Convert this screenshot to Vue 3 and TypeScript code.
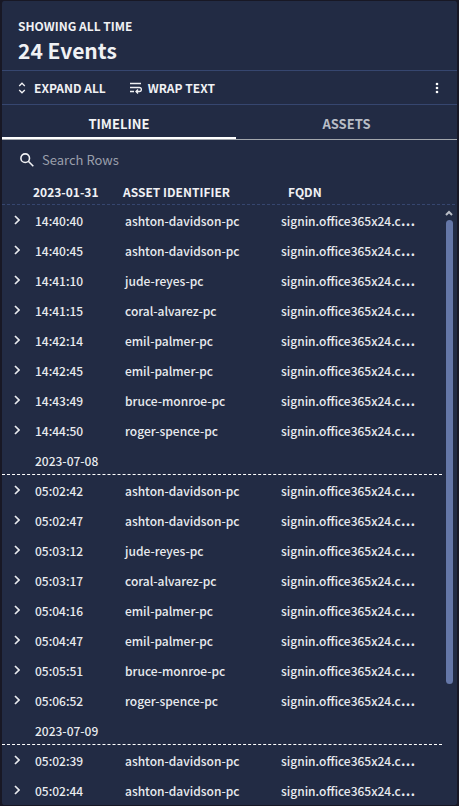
<script setup lang="ts">
import { computed, ref } from 'vue'

interface EventRow {
  time: string
  asset: string
}

interface DayGroup {
  date: string
  events: EventRow[]
}

const fqdn = 'signin.office365x24.c'

const groups: DayGroup[] = [
  {
    date: '2023-01-31',
    events: [
      { time: '14:40:40', asset: 'ashton-davidson-pc' },
      { time: '14:40:45', asset: 'ashton-davidson-pc' },
      { time: '14:41:10', asset: 'jude-reyes-pc' },
      { time: '14:41:15', asset: 'coral-alvarez-pc' },
      { time: '14:42:14', asset: 'emil-palmer-pc' },
      { time: '14:42:45', asset: 'emil-palmer-pc' },
      { time: '14:43:49', asset: 'bruce-monroe-pc' },
      { time: '14:44:50', asset: 'roger-spence-pc' },
    ],
  },
  {
    date: '2023-07-08',
    events: [
      { time: '05:02:42', asset: 'ashton-davidson-pc' },
      { time: '05:02:47', asset: 'ashton-davidson-pc' },
      { time: '05:03:12', asset: 'jude-reyes-pc' },
      { time: '05:03:17', asset: 'coral-alvarez-pc' },
      { time: '05:04:16', asset: 'emil-palmer-pc' },
      { time: '05:04:47', asset: 'emil-palmer-pc' },
      { time: '05:05:51', asset: 'bruce-monroe-pc' },
      { time: '05:06:52', asset: 'roger-spence-pc' },
    ],
  },
  {
    date: '2023-07-09',
    events: [
      { time: '05:02:39', asset: 'ashton-davidson-pc' },
      { time: '05:02:44', asset: 'ashton-davidson-pc' },
    ],
  },
]

const total = 24
const query = ref('')
const tab = ref<'timeline' | 'assets'>('timeline')

const visibleGroups = computed(() =>
  groups.map((group) => ({
    ...group,
    events: group.events.filter((e) => (e.time + ' ' + e.asset).includes(query.value.toLowerCase())),
  })),
)
</script>

<template>
  <main class="panel">
    <header class="summary">
      <p class="range">SHOWING ALL TIME</p>
      <h1 class="count">{{ total }} Events</h1>
    </header>

    <div class="toolbar">
      <button type="button" class="action">
        <svg viewBox="0 0 12 12" width="12" height="12" aria-hidden="true">
          <path d="M3.2 4 6 1.2 8.8 4M3.2 8 6 10.8 8.8 8" />
        </svg>
        EXPAND ALL
      </button>
      <button type="button" class="action">
        <svg viewBox="0 0 12 12" width="12" height="12" aria-hidden="true">
          <path d="M0 1.5h11M0 5.5h9.4a2 2 0 0 1 0 4H6.2M0 9.5h4M8 7.5l-2 2 2 2" />
        </svg>
        WRAP TEXT
      </button>
      <button type="button" class="more" aria-label="More">
        <svg viewBox="0 0 4 12" width="4" height="12" aria-hidden="true">
          <circle cx="2" cy="2" r="1.3" />
          <circle cx="2" cy="6" r="1.3" />
          <circle cx="2" cy="10" r="1.3" />
        </svg>
      </button>
    </div>

    <div class="tabs" role="tablist">
      <button type="button" role="tab" class="tab" :class="{ active: tab === 'timeline' }" :aria-selected="tab === 'timeline'" @click="tab = 'timeline'">TIMELINE</button>
      <button type="button" role="tab" class="tab" :class="{ active: tab === 'assets' }" :aria-selected="tab === 'assets'" @click="tab = 'assets'">ASSETS</button>
    </div>

    <label class="search">
      <svg viewBox="0 0 14 14" width="14" height="14" aria-hidden="true">
        <circle cx="5.2" cy="5.2" r="4.3" />
        <path d="m8.3 8.3 5 5" />
      </svg>
      <input v-model="query" type="text" placeholder="Search Rows" aria-label="Search Rows" />
    </label>

    <div class="listing">
      <table class="events">
        <colgroup>
          <col class="col-toggle" />
          <col class="col-time" />
          <col class="col-asset" />
          <col class="col-fqdn" />
          <col class="col-gutter" />
        </colgroup>
        <thead>
          <tr>
            <td></td>
            <th scope="col">{{ groups[0].date }}</th>
            <th scope="col">ASSET IDENTIFIER</th>
            <th scope="col" class="head-fqdn">FQDN</th>
            <td></td>
          </tr>
        </thead>
        <tbody v-for="(group, index) in visibleGroups" :key="group.date">
          <tr v-if="index > 0">
            <th class="day" colspan="4" scope="rowgroup">{{ group.date }}</th>
            <td></td>
          </tr>
          <tr v-for="event in group.events" :key="event.time">
            <td class="toggle-cell">
              <button type="button" class="toggle" :aria-label="event.time">
                <svg viewBox="0 0 6 10" width="6" height="10" aria-hidden="true"><path d="m1 1 4 4-4 4" /></svg>
              </button>
            </td>
            <td>{{ event.time }}</td>
            <td>{{ event.asset }}</td>
            <td>{{ fqdn }}<span class="ellipsis">…</span></td>
            <td></td>
          </tr>
        </tbody>
      </table>
      <div class="scrollbar" aria-hidden="true">
        <svg viewBox="0 0 8 6" width="8" height="6"><path d="m1 5 3-3 3 3" /></svg>
        <div class="thumb"></div>
      </div>
    </div>
  </main>
</template>

<style>
body {
  background: #181825;
}
</style>

<style scoped>
.panel {
  box-sizing: border-box;
  height: 100vh;
  display: flex;
  flex-direction: column;
  overflow: hidden;
  border: solid #181825;
  border-width: 1px 2px;
  border-radius: 4px;
  background: #222b44;
  color: #f0f1f4;
  font: 500 12px/20px "Noto Sans CJK SC", "Noto Sans", sans-serif;
}

button,
input {
  margin: 0;
  padding: 0;
  border: 0;
  background: none;
  color: inherit;
  font: inherit;
}

button {
  cursor: pointer;
}

svg {
  display: block;
  flex: none;
  fill: none;
  stroke: currentColor;
}

.summary {
  padding: 15px 16px 5px;
  border-bottom: 1px solid #36466f;
}

.range,
.count {
  margin: 0;
}

.range {
  font-weight: 700;
}

.count {
  font-size: 21px;
  line-height: 29px;
  font-weight: 700;
}

.toolbar {
  display: flex;
  align-items: center;
  gap: 24px;
  height: 33px;
  padding: 0 18px 0 14px;
  border-bottom: 1px solid #36466f;
}

.action {
  display: flex;
  align-items: center;
  gap: 6px;
  font-weight: 700;
}

.action svg {
  stroke-width: 1.3;
}

.more {
  margin-left: auto;
}

.more svg {
  fill: #ffffff;
  stroke: none;
}

.tabs {
  display: flex;
  height: 34px;
  border-bottom: 1px solid #a3a7ad;
}

.tab {
  flex: 1 1 auto;
  border-bottom: 2px solid transparent;
  padding-top: 6px;
  color: #b9bdc6;
  font-size: 13px;
  font-weight: 700;
}

.tab.active {
  border-color: #ffffff;
  color: #f3f4f6;
}

.search {
  display: flex;
  align-items: center;
  gap: 8px;
  height: 40px;
  padding: 0 18px;
}

.search svg {
  stroke-width: 1.6;
}

.search input {
  flex: 1;
  min-width: 0;
  outline: 0;
  font-size: 13px;
  font-weight: 400;
}

.search input::placeholder {
  color: #9a9fab;
  opacity: 1;
}

.listing {
  position: relative;
  flex: 1;
  min-height: 0;
  overflow: hidden;
}

.events {
  width: 100%;
  table-layout: fixed;
  border-collapse: separate;
  border-spacing: 0;
}

.col-toggle {
  width: 31px;
}

.col-time {
  width: 90px;
}

.col-asset {
  width: 156px;
}

.col-gutter {
  width: 15px;
}

td,
th {
  box-sizing: border-box;
  height: 30px;
  padding: 2px 2px 0;
  text-align: left;
  font-weight: inherit;
  white-space: nowrap;
}

tbody {
  color: #e9ebef;
}

thead tr {
  background: repeating-linear-gradient(90deg, #36466f 0 3px, transparent 3px 5px) 0 100% / 100% 1px no-repeat;
}

thead th,
thead td {
  height: 25px;
  padding: 0 0 2px;
  font-weight: 700;
}

thead .head-fqdn {
  padding-left: 9px;
}

.day {
  padding-left: 33px;
  border-bottom: 1px dashed #ffffff;
}

.toggle-cell {
  padding: 0 0 0 12px;
}

.toggle svg {
  stroke-width: 1.7;
}

.ellipsis {
  font-family: "Noto Sans", sans-serif;
  font-size: 18px;
  line-height: 16px;
}

.scrollbar {
  position: absolute;
  top: 30px;
  right: 4px;
  bottom: 0;
  display: flex;
  flex-direction: column;
  align-items: center;
  gap: 4px;
  color: #b9bdc6;
}

.scrollbar svg {
  stroke-width: 2;
}

.thumb {
  width: 7px;
  height: 78%;
  border-radius: 4px;
  background: #6577a8;
}
</style>
